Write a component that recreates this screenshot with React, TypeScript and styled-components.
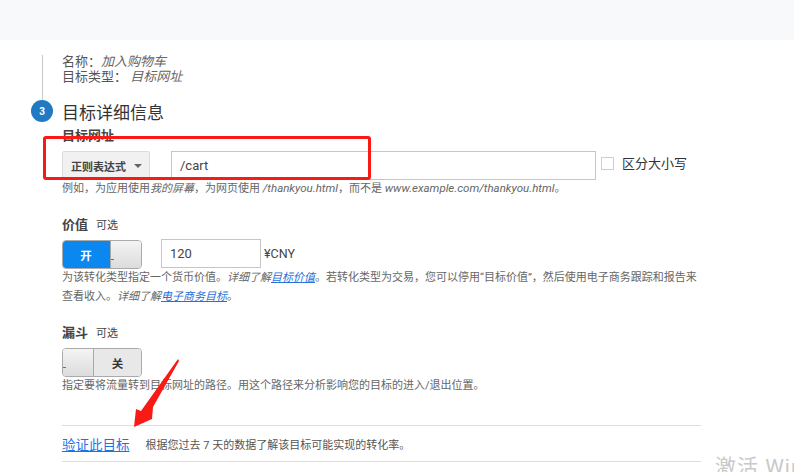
import React from "react";
import styled, { createGlobalStyle } from "styled-components";

const GlobalStyle = createGlobalStyle`
  html, body {
    margin: 0;
    padding: 0;
    background: #fff;
    overflow: hidden;
  }
  body {
    font-family: Roboto, "Liberation Sans", "Noto Sans CJK SC", sans-serif;
    color: #444;
  }
`;

const Page = styled.div`
  position: relative;
  width: 794px;
  height: 472px;
  overflow: hidden;
`;

const TopBand = styled.div`
  height: 40px;
  background: #f8f9fa;
`;

const Content = styled.div`
  display: flex;
  gap: 9px;
  padding-left: 31px;
`;

const Rail = styled.div`
  display: flex;
  flex-direction: column;
  align-items: center;
  flex: 0 0 22px;
  padding-top: 15px;
`;

const RailLine = styled.div`
  width: 1px;
  height: 45px;
  background: #c8c8c8;
`;

const StepDot = styled.div`
  width: 22px;
  height: 22px;
  border-radius: 50%;
  background: #2079c3;
  color: #fff;
  font-size: 10px;
  font-weight: 700;
  display: flex;
  align-items: center;
  justify-content: center;
`;

const Main = styled.div`
  flex: 1;
  padding-top: 14px;
  min-width: 0;
`;

const SummaryLine = styled.div`
  font-size: 13px;
  line-height: 15px;
  color: #555;
`;

const Em = styled.em`
  font-style: italic;
  color: #666;
`;

const Sample = styled(Em)`
  font-size: 11.5px;
`;

const Heading = styled.h2`
  margin: 16px 0 0;
  font-size: 17px;
  line-height: 26px;
  font-weight: 400;
  color: #333;
`;

const FieldLabel = styled.div`
  margin-top: 2px;
  font-size: 13px;
  line-height: 16px;
  font-weight: 700;
  color: #444;
`;

const Row = styled.div`
  display: flex;
  align-items: flex-start;
`;

const UrlRow = styled(Row)`
  margin-top: 7px;
  height: 29px;
`;

const SelectButton = styled.div`
  display: flex;
  align-items: center;
  box-sizing: border-box;
  width: 88px;
  height: 29px;
  padding-left: 8px;
  background: #f1f1f1;
  border: 1px solid #dcdcdc;
  border-radius: 2px;
  font-size: 11px;
  font-weight: 700;
  color: #444;
`;

const Caret = styled.span`
  width: 0;
  height: 0;
  margin-left: 8px;
  border-left: 4px solid transparent;
  border-right: 4px solid transparent;
  border-top: 4px solid #666;
`;

const TextBox = styled.div<{ $width: number }>`
  display: flex;
  align-items: center;
  box-sizing: border-box;
  width: ${(p) => p.$width}px;
  height: 29px;
  padding-left: 8px;
  border: 1px solid #c6c6c6;
  font-size: 13px;
  color: #444;
`;

const UrlBox = styled(TextBox)`
  margin-left: 21px;
`;

const CheckBox = styled.span`
  box-sizing: border-box;
  width: 13px;
  height: 13px;
  margin: 6px 0 0 5px;
  border: 1px solid #cfcfcf;
`;

const CheckLabel = styled.span`
  margin: 4px 0 0 8px;
  font-size: 13px;
  line-height: 17px;
  color: #333;
`;

const UrlHint = styled.div`
  height: 17px;
  font-size: 11px;
  line-height: 17px;
  color: #666;
  white-space: nowrap;
`;

const ToggleHint = styled.div`
  margin-top: -1px;
  font-size: 11px;
  line-height: 19px;
  color: #666;
  white-space: nowrap;
`;

const SectionTitle = styled.div<{ $top: number }>`
  display: flex;
  align-items: baseline;
  height: 18px;
  margin-top: ${(p) => p.$top}px;
  font-size: 13px;
  line-height: 18px;
  font-weight: 700;
  color: #444;
`;

const Optional = styled.span`
  margin-left: 8px;
  font-size: 11px;
  font-weight: 400;
  color: #444;
`;

const Toggle = styled.div`
  display: flex;
  box-sizing: border-box;
  width: 80px;
  height: 29px;
  margin-top: 6px;
  border-radius: 4px;
  overflow: hidden;
  border: 1px solid #aaa;
`;

const ToggleOn = styled.div`
  flex: 0 0 48px;
  display: flex;
  align-items: center;
  justify-content: center;
  background: #0a88f0;
  color: #fff;
  font-size: 11.5px;
  font-weight: 700;
  margin: -1px 0 -1px -1px;
`;

const ToggleOff = styled.div`
  flex: 1;
  display: flex;
  align-items: center;
  justify-content: center;
  background: #e8e8e8;
  color: #333;
  font-size: 11.5px;
  font-weight: 700;
`;

const ToggleKnob = styled.div<{ $side: "left" | "right" }>`
  position: relative;
  flex: 0 0 31px;
  box-sizing: border-box;
  background: linear-gradient(#f4f4f4, #dcdcdc);
  border-${(p) => (p.$side === "left" ? "right" : "left")}: 1px solid #a8a8a8;
`;

const KnobTick = styled.span`
  position: absolute;
  left: 0;
  bottom: 8px;
  width: 3px;
  height: 1px;
  background: #0a88f0;
`;

const ValueBox = styled(TextBox)`
  margin: 5px 0 0 19px;
`;

const Currency = styled.span`
  margin: 5px 0 0 3px;
  font-size: 12.5px;
  line-height: 29px;
  color: #444;
`;

const HelpLink = styled.a`
  color: #2a6fd8;
  text-decoration: underline;
  font-style: italic;
`;

const VerifyRow = styled.div`
  display: flex;
  align-items: center;
  box-sizing: border-box;
  width: 639px;
  height: 37px;
  margin-top: 30px;
  border-top: 1px solid #ddd;
  border-bottom: 1px solid #ddd;
`;

const VerifyLink = styled.a`
  font-size: 13.5px;
  color: #1a73e8;
  text-decoration: underline;
`;

const VerifyText = styled.span`
  margin-left: 16px;
  font-size: 11px;
  color: #555;
`;

const RedFrame = styled.div`
  position: absolute;
  left: 43px;
  top: 136px;
  width: 328px;
  height: 44px;
  box-sizing: border-box;
  border: 3px solid #f81a14;
  border-radius: 3px;
`;

const ArrowMark = styled.svg`
  position: absolute;
  left: 130px;
  top: 355px;
`;

const Watermark = styled.div`
  position: absolute;
  left: 715px;
  top: 454px;
  font-size: 21px;
  line-height: 26px;
  letter-spacing: 1px;
  color: #c9c9c9;
  white-space: nowrap;
`;

export default function App() {
  return (
    <Page>
      <GlobalStyle />
      <TopBand />
      <Content>
        <Rail>
          <RailLine />
          <StepDot>3</StepDot>
        </Rail>
        <Main>
          <SummaryLine>
            名称：<Em>加入购物车</Em>
          </SummaryLine>
          <SummaryLine>
            目标类型： <Em>目标网址</Em>
          </SummaryLine>
          <Heading>目标详细信息</Heading>
          <FieldLabel>目标网址</FieldLabel>
          <UrlRow>
            <SelectButton>
              正则表达式
              <Caret />
            </SelectButton>
            <UrlBox $width={425}>/cart</UrlBox>
            <CheckBox />
            <CheckLabel>区分大小写</CheckLabel>
          </UrlRow>
          <UrlHint>
            例如，为应用使用<Em>我的屏幕</Em>，为网页使用 <Sample>/thankyou.html</Sample>，而不是{" "}
            <Sample>www.example.com/thankyou.html</Sample>。
          </UrlHint>
          <SectionTitle $top={19}>
            价值<Optional>可选</Optional>
          </SectionTitle>
          <Row>
            <Toggle>
              <ToggleOn>开</ToggleOn>
              <ToggleKnob $side="right">
                <KnobTick />
              </ToggleKnob>
            </Toggle>
            <ValueBox $width={100}>120</ValueBox>
            <Currency>¥CNY</Currency>
          </Row>
          <ToggleHint>
            为该转化类型指定一个货币价值。<Em>详细了解</Em>
            <HelpLink>目标价值</HelpLink>。若转化类型为交易，您可以停用“目标价值”，然后使用电子商务跟踪和报告来
            <br />
            查看收入。<Em>详细了解</Em>
            <HelpLink>电子商务目标</HelpLink>。
          </ToggleHint>
          <SectionTitle $top={18}>
            漏斗<Optional>可选</Optional>
          </SectionTitle>
          <Toggle>
            <ToggleKnob $side="left">
              <KnobTick />
            </ToggleKnob>
            <ToggleOff>关</ToggleOff>
          </Toggle>
          <ToggleHint>指定要将流量转到目标网址的路径。用这个路径来分析影响您的目标的进入/退出位置。</ToggleHint>
          <VerifyRow>
            <VerifyLink>验证此目标</VerifyLink>
            <VerifyText>根据您过去 7 天的数据了解该目标可能实现的转化率。</VerifyText>
          </VerifyRow>
        </Main>
      </Content>
      <RedFrame />
      <ArrowMark width="52" height="74" viewBox="0 0 52 74">
        <path d="M48 4 L49 6 L23 52 L22 64 L4 72 L6 54 L11 56 Z" fill="#f81a14" />
      </ArrowMark>
      <Watermark>激活 Windows</Watermark>
    </Page>
  );
}
